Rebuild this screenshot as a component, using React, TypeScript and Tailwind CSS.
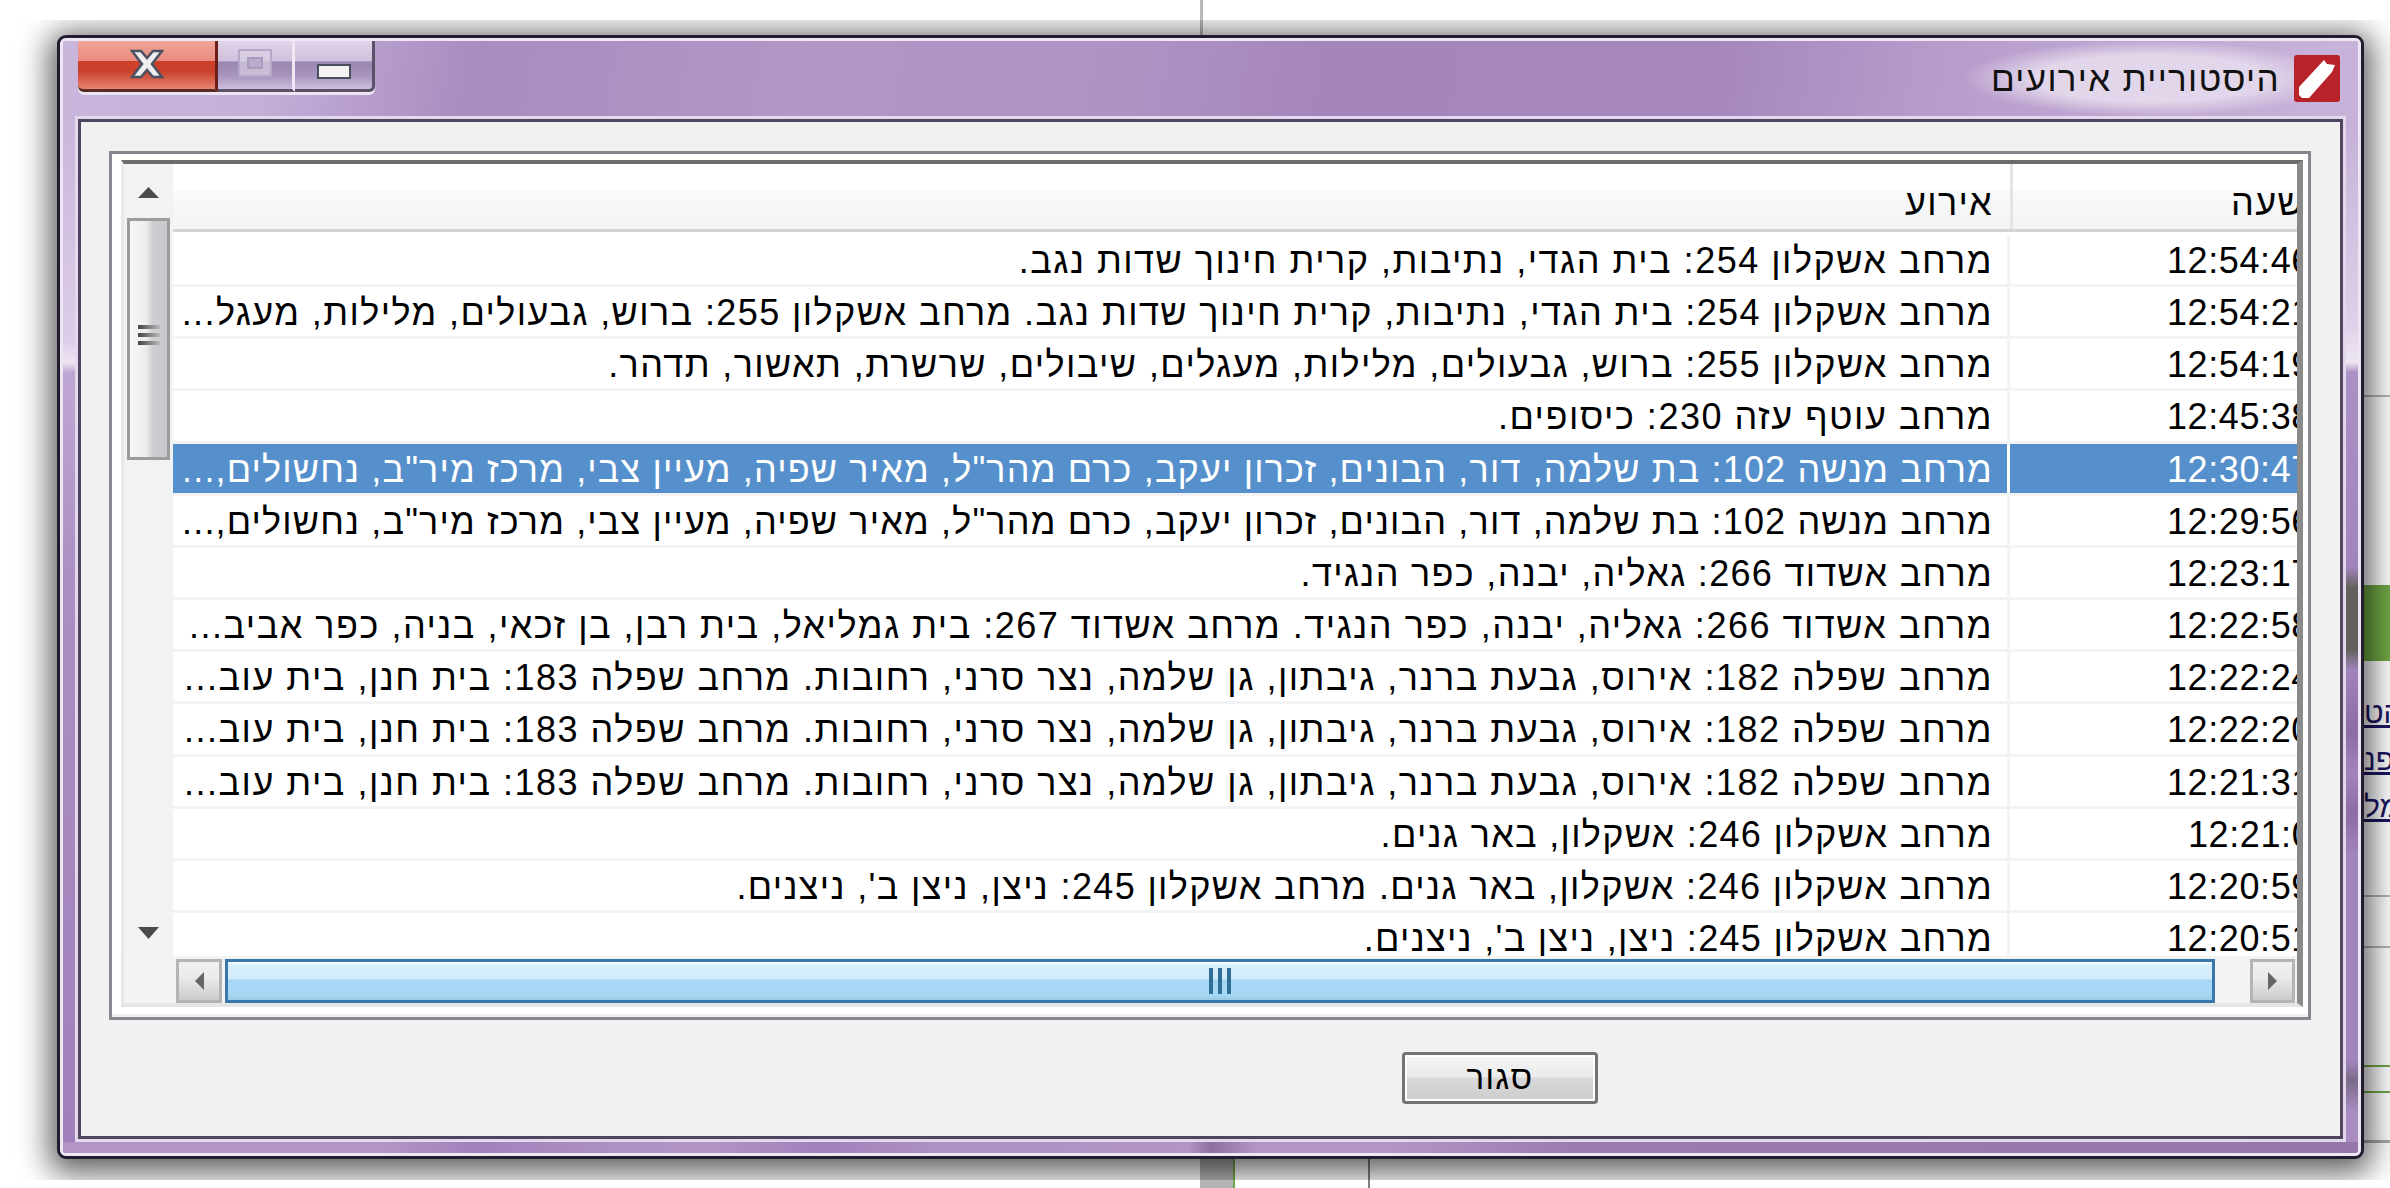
import React from 'react';

const rows = [
  { text: 'מרחב אשקלון 254: בית הגדי, נתיבות, קרית חינוך שדות נגב.', time: '12:54:46', spacing: 'tracking-[1.5px]' },
  { text: 'מרחב אשקלון 254: בית הגדי, נתיבות, קרית חינוך שדות נגב. מרחב אשקלון 255: ברוש, גבעולים, מלילות, מעגל...', time: '12:54:21', spacing: 'tracking-[1.4px]' },
  { text: 'מרחב אשקלון 255: ברוש, גבעולים, מלילות, מעגלים, שיבולים, שרשרת, תאשור, תדהר.', time: '12:54:19', spacing: 'tracking-[1.4px]' },
  { text: 'מרחב עוטף עזה 230: כיסופים.', time: '12:45:38', spacing: 'tracking-[1.5px]' },
  { text: 'מרחב מנשה 102: בת שלמה, דור, הבונים, זכרון יעקב, כרם מהר"ל, מאיר שפיה, מעיין צבי, מרכז מיר"ב, נחשולים,...', time: '12:30:47', selected: true, spacing: 'tracking-[1.15px]' },
  { text: 'מרחב מנשה 102: בת שלמה, דור, הבונים, זכרון יעקב, כרם מהר"ל, מאיר שפיה, מעיין צבי, מרכז מיר"ב, נחשולים,...', time: '12:29:56', spacing: 'tracking-[1.15px]' },
  { text: 'מרחב אשדוד 266: גאליה, יבנה, כפר הנגיד.', time: '12:23:17', spacing: 'tracking-[1.3px]' },
  { text: 'מרחב אשדוד 266: גאליה, יבנה, כפר הנגיד. מרחב אשדוד 267: בית גמליאל, בית רבן, בן זכאי, בניה, כפר אביב...', time: '12:22:58', spacing: 'tracking-[1.5px]' },
  { text: 'מרחב שפלה 182: אירוס, גבעת ברנר, גיבתון, גן שלמה, נצר סרני, רחובות. מרחב שפלה 183: בית חנן, בית עוב...', time: '12:22:24', spacing: 'tracking-[1.5px]' },
  { text: 'מרחב שפלה 182: אירוס, גבעת ברנר, גיבתון, גן שלמה, נצר סרני, רחובות. מרחב שפלה 183: בית חנן, בית עוב...', time: '12:22:20', spacing: 'tracking-[1.5px]' },
  { text: 'מרחב שפלה 182: אירוס, גבעת ברנר, גיבתון, גן שלמה, נצר סרני, רחובות. מרחב שפלה 183: בית חנן, בית עוב...', time: '12:21:31', spacing: 'tracking-[1.5px]' },
  { text: 'מרחב אשקלון 246: אשקלון, באר גנים.', time: '12:21:06', short: true, spacing: 'tracking-[1.3px]' },
  { text: "מרחב אשקלון 246: אשקלון, באר גנים. מרחב אשקלון 245: ניצן, ניצן ב', ניצנים.", time: '12:20:59', spacing: 'tracking-[1.35px]' },
  { text: "מרחב אשקלון 245: ניצן, ניצן ב', ניצנים.", time: '12:20:51', spacing: 'tracking-[1.3px]' },
];

const Desktop = () => (
  <div className="absolute inset-0">
    <div className="absolute left-[1200px] top-0 h-[60px] w-[3px] bg-[#b8b8b8]" />
    <div className="absolute left-[1200px] top-[1150px] h-[38px] w-[33px] bg-[#b4b4b4]" />
    <div className="absolute left-[1233px] top-[1150px] h-[38px] w-[2px] bg-[#6fa845]" />
    <div className="absolute left-[1368px] top-[1150px] h-[38px] w-[2px] bg-[#808080]" />
    <div className="absolute left-[2364px] top-[395px] h-[2px] w-[26px] bg-[#b4b4b4]" />
    <div className="absolute left-[2364px] top-[585px] h-[76px] w-[26px] bg-[#6fa845]" />
    <div className="absolute left-[2364px] top-[895px] h-[2px] w-[26px] bg-[#b4b4b4]" />
    <div className="absolute left-[2364px] top-[946px] h-[2px] w-[26px] bg-[#b4b4b4]" />
    <div className="absolute left-[2364px] top-[1065px] h-[2px] w-[26px] bg-[#6fa845]" />
    <div className="absolute left-[2364px] top-[1091px] h-[2px] w-[26px] bg-[#6fa845]" />
    <div className="absolute left-[2364px] top-[1140px] h-[3px] w-[26px] bg-[#a8a8a8]" />
    <div className="absolute left-[2364px] top-[696px] flex w-[26px] flex-col gap-[13px] overflow-hidden text-[30px] leading-[34px] text-[#1c1763] underline [font-family:'Liberation_Sans',sans-serif]">
      <span>הט</span>
      <span>פנ</span>
      <span>מל</span>
    </div>
  </div>
);

const CaptionButton = ({ className, children }: { className: string; children?: React.ReactNode }) => (
  <div className={`flex h-[54px] items-start justify-center border-b-[3px] border-r-[3px] ${className}`}>{children}</div>
);

const TitleBar = () => (
  <div className="relative flex h-[75px] items-start justify-between bg-[linear-gradient(100deg,#c9b6db_0%,#c4afd8_9%,#a98cc0_18%,#b196c6_32%,#ae92c4_47%,#a485bc_55%,#a587be_72%,#b89dcc_82%,#c2aad4_92%,#c8b4da_100%)] pl-[15px] pr-[18px]">
    <div className="-mt-[3px] flex rounded-b-[6px] shadow-[0_3px_0_#ece4f2]">
      <CaptionButton className="w-[140px] rounded-bl-[6px] border-b-[#5c2a26] border-r-[#6a1f18] bg-[linear-gradient(180deg,#f3a99e_0%,#e88a7d_45%,#cf3f2a_46%,#c9402b_65%,#e68570_100%)]">
        <svg width="34" height="30" viewBox="0 0 34 30" className="mt-[11px]">
          <path d="M2 2h9l6 7 6-7h9l-10 13 10 13h-9l-6-7-6 7H2l10-13z" fill="#eeeeee" stroke="#4c5262" strokeWidth="2.5" />
        </svg>
      </CaptionButton>
      <CaptionButton className="w-[77px] border-b-[#5a5068] border-r-[#efe8f4] bg-[linear-gradient(180deg,#e2d6ea_0%,#cfc1dc_45%,#9a86b0_47%,#a996bf_75%,#cdbfe0_100%)]">
        <div className="mt-[11px] flex h-[28px] w-[34px] items-center justify-center border-[2px] border-[#b5a8c8] bg-[#d9d0e2]/70">
          <div className="h-[12px] w-[16px] border-[2px] border-[#a99abf] bg-[#b9accb]" />
        </div>
      </CaptionButton>
      <CaptionButton className="w-[80px] rounded-br-[6px] border-b-[#5a5068] border-r-[#5a5068] bg-[linear-gradient(180deg,#e2d6ea_0%,#cfc1dc_45%,#9a86b0_47%,#a996bf_75%,#cdbfe0_100%)]">
        <div className="mt-[26px] h-[15px] w-[34px] border-[2px] border-[#4a4f60] bg-[#f2f2f2]" />
      </CaptionButton>
    </div>
    <div className="flex h-full items-start gap-[14px] bg-[radial-gradient(closest-side,#e2d6ea_62%,transparent)] pl-[28px]">
      <span dir="rtl" className="mt-[20px] text-[35px] leading-[36px] tracking-[1.3px] text-[#111] whitespace-nowrap [font-family:'Liberation_Sans',sans-serif]">
        היסטוריית אירועים
      </span>
      <svg width="46" height="47" viewBox="0 0 46 47" className="mt-[14px] shrink-0">
        <rect width="46" height="47" rx="3" fill="#b8232a" />
        <path d="M5 40V32L30 5l3 4 8 1-3 7L15 43H8z" fill="#ffffff" />
      </svg>
    </div>
  </div>
);

const VScroll = () => (
  <div className="flex w-[49px] shrink-0 flex-col items-center bg-[#f1f2f3]">
    <div className="flex h-[54px] items-start pt-[23px]">
      <svg width="21" height="11" viewBox="0 0 21 11"><path d="M10.5 0L21 11H0z" fill="#4a4a4a" /></svg>
    </div>
    <div className="flex h-[242px] w-[43px] flex-col items-center border-[3px] border-[#9c9c9c] bg-[linear-gradient(90deg,#f7f8f8_0%,#ececec_45%,#cfcfd3_60%,#c8c8cc_100%)]">
      <div className="mt-[104px] flex w-[22px] flex-col gap-[4px]">
        <div className="h-[4px] bg-[linear-gradient(90deg,#444,#bbb)]" />
        <div className="h-[4px] bg-[linear-gradient(90deg,#444,#bbb)]" />
        <div className="h-[4px] bg-[linear-gradient(90deg,#444,#bbb)]" />
      </div>
    </div>
    <div className="flex flex-1 flex-col items-center justify-end pb-[17px]">
      <svg width="21" height="12" viewBox="0 0 21 12"><path d="M0 0h21L10.5 12z" fill="#4a4a4a" /></svg>
    </div>
  </div>
);

const HScroll = () => (
  <div className="flex h-[47px] items-start pl-[52px] pt-[3px]">
    <div className="flex h-[44px] w-[46px] items-center justify-center border-[3px] border-[#b4b4b4] bg-[linear-gradient(180deg,#f1f1f1_0%,#e9e9e9_45%,#cbcbcb_100%)]">
      <svg width="9" height="18" viewBox="0 0 9 18"><path d="M9 0v18L0 9z" fill="#666666" /></svg>
    </div>
    <div className="ml-[3px] flex h-[44px] w-[1990px] items-center justify-center border-[3px] border-[#3a78ab] bg-[linear-gradient(180deg,#ffffff_0%,#d6edfb_10%,#d2ebfa_45%,#a6d8f6_47%,#a6d8f6_85%,#9cc9e4_100%)]">
      <div className="flex h-[26px] gap-[5px]">
        <div className="w-[4px] bg-[#2f6f97]" />
        <div className="w-[4px] bg-[#2f6f97]" />
        <div className="w-[4px] bg-[#2f6f97]" />
      </div>
    </div>
    <div className="ml-[35px] flex h-[44px] w-[45px] items-center justify-center border-[3px] border-[#b4b4b4] bg-[linear-gradient(180deg,#f1f1f1_0%,#e9e9e9_45%,#cbcbcb_100%)]">
      <svg width="9" height="18" viewBox="0 0 9 18"><path d="M0 0v18l9-9z" fill="#666666" /></svg>
    </div>
  </div>
);

const EventTable = () => (
  <div className="flex w-[2124px] flex-col overflow-hidden text-[36px] text-black [font-family:'Liberation_Sans',sans-serif]">
    <div className="flex h-[68px] shrink-0 border-b-[3px] border-[#d4d4d4] bg-[linear-gradient(180deg,#ffffff_0%,#ffffff_40%,#f8f9fa_41%,#f3f4f6_100%)]">
      <div dir="rtl" className="flex w-[1840px] shrink-0 items-end border-r-[3px] border-[#e2e4e6] pb-[7px] pr-[17px] leading-[38px] tracking-[1.3px]">אירוע</div>
      <div dir="rtl" className="flex w-[284px] items-end justify-start overflow-hidden pb-[7px] leading-[38px] tracking-[1.3px] whitespace-nowrap">
        <span className="-mr-[8px] shrink-0">שעה</span>
      </div>
    </div>
    <div className="flex-1 overflow-hidden bg-white pt-[3px]">
      {rows.map((row) => (
        <div
          key={row.time}
          className={`flex h-[52.17px] border-b-[3px] border-[#f2f3f4] leading-[49px] ${row.selected ? 'bg-[#5590cc] text-white' : ''}`}
        >
          <div
            dir="rtl"
            className={`w-[1837px] shrink-0 overflow-hidden whitespace-nowrap border-r-[3px] pr-[14px] pt-[1px] ${row.spacing} ${row.selected ? 'border-white' : 'border-[#f2f3f4]'}`}
          >
            {row.text}
          </div>
          <div className={`w-[287px] overflow-hidden whitespace-nowrap pt-[1px] tracking-[0.6px] ${row.short ? 'pl-[178px]' : 'pl-[157px]'}`}>{row.time}</div>
        </div>
      ))}
    </div>
  </div>
);

const EventList = () => (
  <div className="h-[860px] bg-white pl-[9px] pr-[5px] pt-[6px]">
    <div className="flex h-[847px] w-[2182px] flex-col border-b-[4px] border-l-[3px] border-r-[6px] border-t-[4px] border-b-[#e4e6e6] border-l-[#e6e8ea] border-r-[#8a8a8a] border-t-[#6b6b6b] bg-[#f2f3f3]">
      <div className="flex h-[792px] shrink-0">
        <VScroll />
        <EventTable />
      </div>
      <HScroll />
    </div>
  </div>
);

export default function App() {
  return (
    <div className="relative h-[1188px] w-[2390px] overflow-hidden bg-white">
      <Desktop />
      <div className="relative h-[1160px] translate-y-[20px] overflow-hidden pl-[57px] pt-[15px]">
        <div className="h-[1124px] w-[2307px] rounded-[9px] border-[3px] border-[#231c2e] bg-[#a587be] shadow-[0_6px_30px_8px_rgba(0,0,0,0.62)]">
          <div className="flex h-full flex-col overflow-hidden rounded-[6px] border-[3px] border-[#eee6f3]">
            <TitleBar />
            <div className="flex h-[1026px]">
              <div className="w-[12px] bg-[linear-gradient(180deg,#c9b6db_0%,#dccde8_22%,#eee6f3_24%,#bfa7d3_25%,#ab8fc2_45%,#a080bb_100%)]" />
              <div className="w-[2271px] border-[3px] border-[#e3d8ec]">
                <div className="flex h-full flex-col border-[3px] border-[#4f4560] bg-[#f1f1f1] pl-[28px] pt-[29px]">
                  <div className="h-[869px] w-[2202px] border-[3px] border-[#85888f]">
                    <EventList />
                  </div>
                  <button
                    dir="rtl"
                    className="ml-[1293px] mt-[32px] h-[52px] w-[196px] rounded-[4px] border-[3px] border-[#747474] bg-[linear-gradient(180deg,#f4f5f6_0%,#ebebeb_48%,#d9d9d9_50%,#cdcdcd_100%)] text-[33px] leading-[40px] tracking-[1.3px] text-black shadow-[inset_0_0_0_2px_#ffffff] [font-family:'Liberation_Sans',sans-serif]"
                  >
                    סגור
                  </button>
                </div>
              </div>
              <div className="w-[12px] bg-[linear-gradient(180deg,#c5b0d8_0%,#ddd0e8_20%,#eee6f3_24%,#ab90c4_25%,#a284bd_44%,#62605a_46%,#62605a_52%,#a284bd_54%,#8c6ba6_60%,#a284bd_64%,#8c6ba6_68%,#a284bd_72%,#a284bd_92%,#7b6a88_94%,#a88cc2_97%)]" />
            </div>
            <div className="h-[11px] bg-[linear-gradient(90deg,#b294c6_0%,#b294c6_14%,#a181bb_18%,#ad90c4_24%,#b294c6_28%,#a181bb_33%,#ad90c4_38%,#b294c6_49%,#8e709f_50%,#b294c6_52%,#b294c6_58%,#9b7bb0_66%,#9675ad_100%)]" />
          </div>
        </div>
      </div>
    </div>
  );
}
